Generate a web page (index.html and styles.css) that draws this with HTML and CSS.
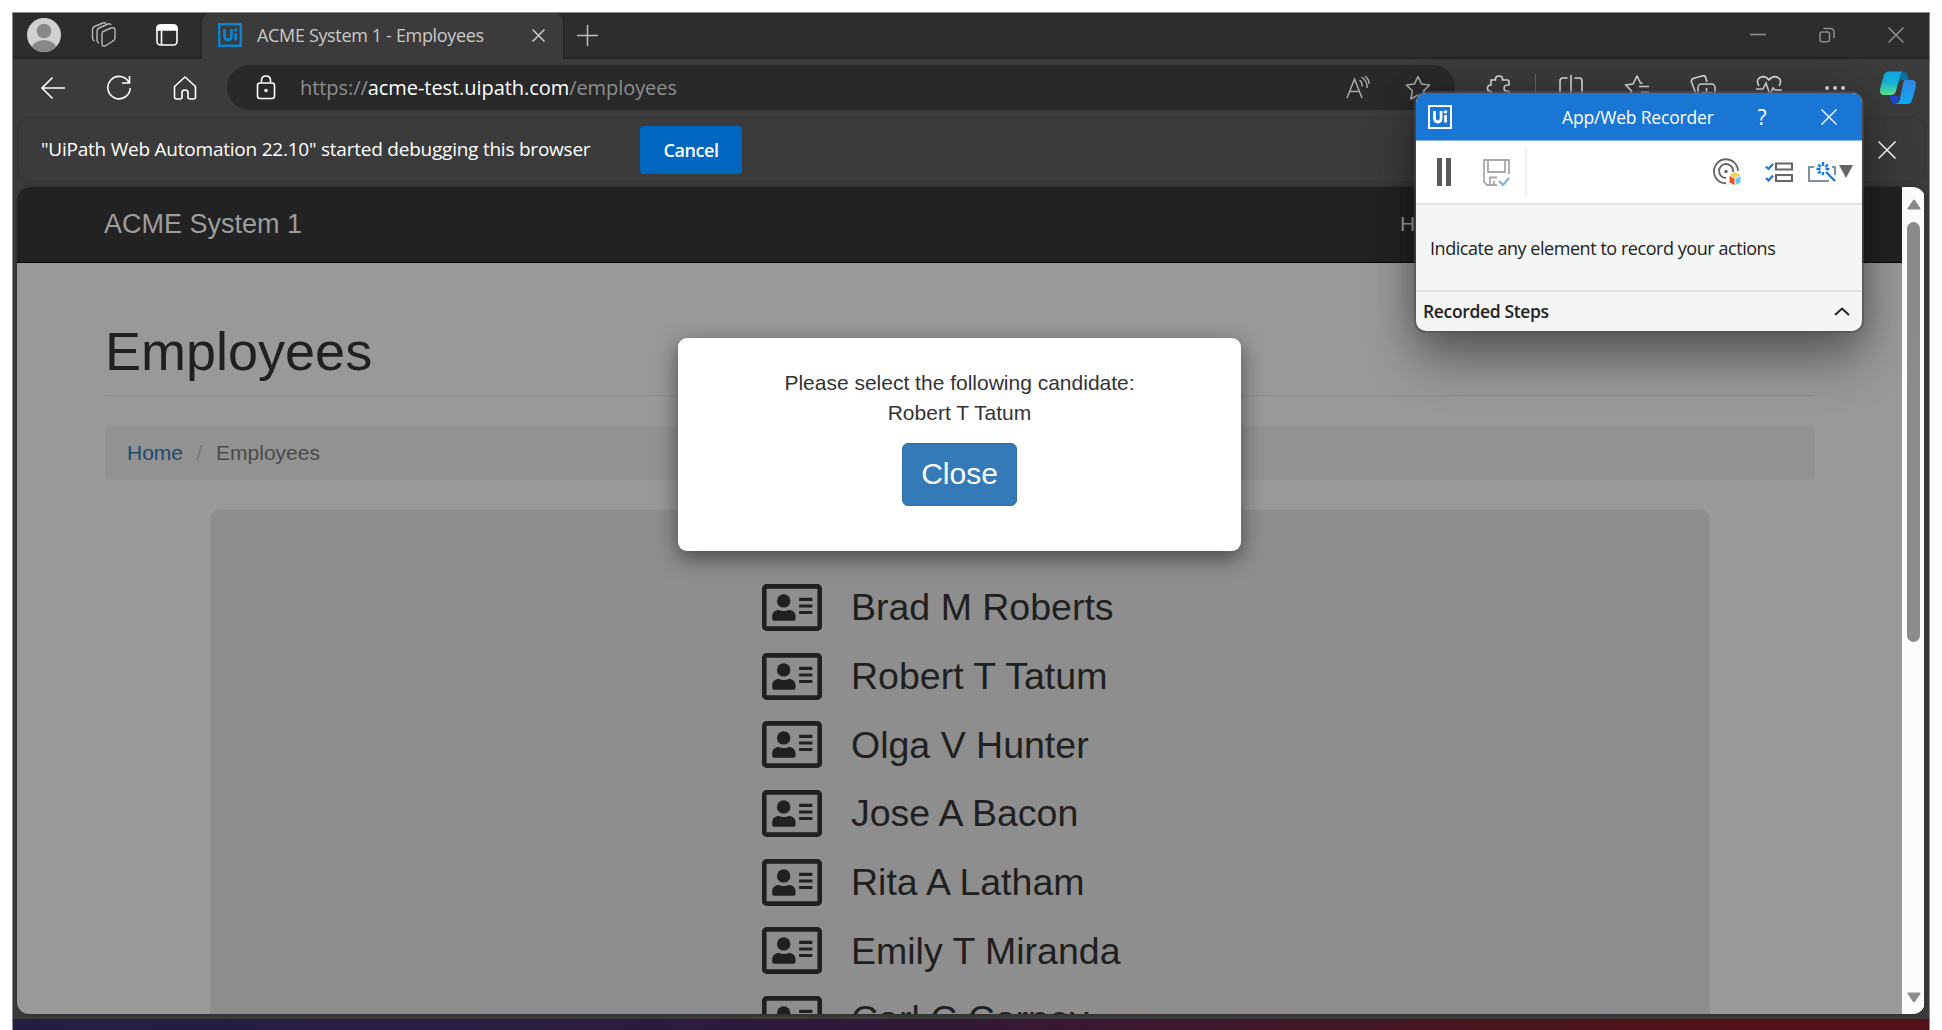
FILE: index.html
```html
<!DOCTYPE html>
<html lang="en">
<head>
<meta charset="utf-8">
<title>ACME System 1 - Employees</title>
<link rel="stylesheet" href="styles.css">
</head>
<body>
<svg width="0" height="0" class="defs">
  <symbol id="card" viewBox="0 0 59 46"><rect x="2.2" y="2.2" width="54.6" height="41.6" rx="2.5" fill="none" stroke="#202020" stroke-width="4.6"/><circle cx="21.3" cy="16.5" r="6.6" fill="#202020"/><path d="M10 34v-2c0-4.5 3-6.6 6.500-6.600 2 .8 3 1.100 5 1.100s3-.3 5-1.100c3.500 0 6.500 2.100 6.500 6.600v2q0 2-2 2H12q-2 0-2-2z" fill="#202020"/><path d="M36.500 15h13M36.500 21.500h13M36.500 28h13" stroke="#202020" stroke-width="3"/></symbol>
</svg>
<div class="window">
  <header class="tabs">
    <svg class="avatar" viewBox="0 0 34 34"><clipPath id="av"><circle cx="17" cy="17" r="17"/></clipPath><g clip-path="url(#av)"><path fill="#d2d0ce" d="M0 0h34v34H0z"/><circle cx="17" cy="13" r="7.300" fill="#8a8886"/><ellipse cx="17" cy="31" rx="12.500" ry="9" fill="#8a8886"/></g></svg>
    <svg class="workspaces" viewBox="0 0 26 26" fill="none" stroke="#b8b8b8" stroke-width="1.400"><path d="M11 10l9-4q4-1 4 2v8q0 2-2 3l-7 4.500q-4 2-4-2v-9.500q0-1.500 1.500-2.500z"/><path d="M8 21q-2-.5-2-3V9q0-2 2-3l9-4q2-.8 3 1"/><path d="M3.500 19Q1.500 18 1.500 16V7.500q0-2 2-3L12 1q2-.8 3 .6"/></svg>
    <svg class="tabpanel" viewBox="0 0 22 22" fill="none" stroke="#fff" stroke-width="1.600"><rect x="1" y="1" width="20" height="20" rx="3.500"/><path d="M1 4.500Q1 1 4.500 1h13Q21 1 21 4.500V6H1z" fill="#fff"/><path d="M5.500 6v15"/></svg>
    <div class="tab">
      <svg class="favicon" viewBox="0 0 24 24"><path fill="none" stroke="#0a85d1" stroke-width="2.400" d="M1.200 1.200h21.600v21.600H1.200z"/><path d="M6.500 6v7q0 4 3.500 4t3.500-4V6M17.800 10v7.500" fill="none" stroke="#0a85d1" stroke-width="2.800"/><circle cx="17.800" cy="7" r="1.700" fill="#0a85d1"/></svg>
      <span class="tab-title">ACME System 1 - Employees</span>
      <svg class="x-tab" viewBox="0 0 13 13" stroke="#cfcfcf" stroke-width="1.500"><path d="M.5.5l12 12M12.500.5l-12 12"/></svg>
    </div>
    <svg class="plus" viewBox="0 0 21 21" stroke="#c0c0c0" stroke-width="1.500"><path d="M10.500 0v21M0 10.500h21"/></svg>
    <div class="winbtns">
      <svg width="16" height="16" viewBox="0 0 16 16" stroke="#8f8f8f" stroke-width="1.600"><path d="M0 7.500h16"/></svg>
      <svg width="16" height="16" viewBox="0 0 16 16" fill="none" stroke="#8f8f8f" stroke-width="1.500"><rect x="1" y="5" width="9.500" height="9.800" rx="2"/><path d="M4.500 1.500H11q4 0 4 4v5.500"/></svg>
      <svg width="16" height="16" viewBox="0 0 16 16" stroke="#8f8f8f" stroke-width="1.500"><path d="M.5.5l15 15M15.500.5l-15 15"/></svg>
    </div>
  </header>
  <nav class="toolbar">
    <span class="cell"><svg width="26" height="24" viewBox="0 0 26 24" fill="none" stroke="#fff" stroke-width="1.600"><path d="M25 12H1.500M12.500 1.500L2 12l10.500 10.500"/></svg></span>
    <span class="cell"><svg width="26" height="26" viewBox="0 0 26 26" fill="none" stroke="#fff" stroke-width="1.600"><path d="M23 7.500A11.200 11.200 0 1 0 24.200 13M23.500 1v7H16"/></svg></span>
    <span class="cell"><svg width="24" height="26" viewBox="0 0 24 26" fill="none" stroke="#fff" stroke-width="1.600" stroke-linejoin="round"><path d="M1.500 11.500L12 2l10.500 9.500V22q0 2-2 2H17q-2 0-2-2v-4.500q0-2.500-3-2.500t-3 2.500V22q0 2-2 2H3.500q-2 0-2-2z"/></svg></span>
    <div class="address">
      <svg class="lock" viewBox="0 0 20 25" fill="none" stroke="#fff" stroke-width="1.600"><rect x="1.500" y="8" width="17" height="15.500" rx="2.500"/><path d="M5.500 8V5.500q0-4.500 4.500-4.500t4.500 4.500V8"/><circle cx="10" cy="15.500" r="1" fill="#fff"/></svg>
      <span class="url">https://<b>acme-test.uipath.com</b>/employees</span>
      <svg class="aloud" viewBox="0 0 25 24" fill="none" stroke="#aaa" stroke-width="1.500"><path d="M1 22L8.500 3 16 22M3.500 15.500h10M13.500 4q3 2 2.500 6.500M15.500 1q6 4 5.500 11M19 0q4 3 4 8"/></svg>
      <svg class="star" viewBox="0 0 26 26" fill="none" stroke="#aaa" stroke-width="1.500" stroke-linejoin="round"><path d="M13 1.500l3.600 7.600 8 1-6 5.700 1.600 8.200L13 20l-7.200 4 1.600-8.200-6-5.700 8-1z"/></svg>
    </div>
    <div class="actions">
      <span class="cell"><svg width="26" height="26" viewBox="0 0 26 26" fill="none" stroke="#ddd" stroke-width="1.600"><path d="M5 5h4.500q-.5-4 3.500-4t3.500 4H21q2 0 2 2v3q-5-.3-5 3.200t5 3.300V25H5v-8.500q-3.500-.3-3.500-3.300T5 10V7z"/></svg></span>
      <i class="sep"></i>
      <span class="cell"><svg width="26" height="26" viewBox="0 0 26 26" fill="none" stroke="#ddd" stroke-width="1.600"><path d="M9 25H2V6q0-3 3-3h4.500M16.500 25H24V6q0-3-3-3h-4.500M13 0v26"/></svg></span>
      <span class="cell"><svg width="26" height="26" viewBox="0 0 26 26" fill="none" stroke="#ddd" stroke-width="1.600" stroke-linejoin="round"><path d="M18.500 8.500l-2-.5L13 1 9 9l-7.500 1 6 5.800L5.500 24M15 11.500h10M17 17h8M17 22h8"/></svg></span>
      <span class="cell"><svg width="26" height="26" viewBox="0 0 26 26" fill="none" stroke="#ddd" stroke-width="1.600"><path d="M6 19L1.500 7Q1 4.500 3 3.500L12 1q3-.8 3.500 1L17 7"/><rect x="8" y="9" width="17" height="17" rx="3.500"/><path d="M16.500 13v10M11.500 18h10"/></svg></span>
      <span class="cell"><svg width="26" height="26" viewBox="0 0 26 26" fill="none" stroke="#ddd" stroke-width="1.600"><path d="M3 11Q-.5 5 4 2.500q5-2.500 9 2.500 4-5 9-2.500Q26.500 5 23 11M0 14h7l3-6 4 12 3-7 2 2h7M6 18l7 7"/><circle cx="20" cy="22" r="4.500" fill="#3f8f45" stroke="none"/></svg></span>
      <span class="cell dots"><svg width="22" height="6" viewBox="0 0 22 6" fill="#e6e6e6"><circle cx="3" cy="3" r="1.900"/><circle cx="11" cy="3" r="1.900"/><circle cx="19" cy="3" r="1.900"/></svg></span>
      <svg class="copilot" viewBox="0 0 36 33"><defs><linearGradient id="cg" x2="0" y2="1"><stop stop-color="#0fa5e8"/><stop offset=".5" stop-color="#18b3cf"/><stop offset="1" stop-color="#5fe38d"/></linearGradient><linearGradient id="cb" x2="0" y2="1"><stop stop-color="#2f86e0"/><stop offset="1" stop-color="#12a8f5"/></linearGradient></defs><path d="M18 1h6q3 0 4 4l1 4h-8l-5 5z" fill="#0b6f9c"/><path d="M10 25h9l-2 8h-1q-4 0-5-4z" fill="#1c47d8"/><path d="M9 .5h15q-3 0-4 4L16 20q-1 4-5 4H4q-4 0-4-4 0-2 1-6L4 4Q5 .5 9 .5z" fill="url(#cg)"/><path d="M25 9h7q4 0 4 4 0 2-1 6l-3 10q-1 4-5 4H16q3-1 4-5l3-15q.500-4 2-4z" fill="url(#cb)"/></svg>
    </div>
  </nav>
  <div class="infobar">
    <span class="info-text">"UiPath Web Automation 22.10" started debugging this browser</span>
    <button class="cancel">Cancel</button>
    <svg class="x-info" viewBox="0 0 18 18" stroke="#fff" stroke-width="1.500"><path d="M.5.5l17 17M17.500.5l-17 17"/></svg>
  </div>
  <div class="viewport">
    <main class="page">
      <div class="navbar"><span class="brand">ACME System 1</span><span class="navlink">Home</span></div>
      <div class="container">
        <h1>Employees</h1>
        <div class="breadcrumb"><a>Home</a><i>/</i><span>Employees</span></div>
        <ul class="people">
          <li><svg><use href="#card"/></svg>Brad M Roberts</li>
          <li><svg><use href="#card"/></svg>Robert T Tatum</li>
          <li><svg><use href="#card"/></svg>Olga V Hunter</li>
          <li><svg><use href="#card"/></svg>Jose A Bacon</li>
          <li><svg><use href="#card"/></svg>Rita A Latham</li>
          <li><svg><use href="#card"/></svg>Emily T Miranda</li>
          <li><svg><use href="#card"/></svg>Carl C Corney</li>
        </ul>
      </div>
      <div class="modal">
        <p>Please select the following candidate:<br>Robert T Tatum</p>
        <button>Close</button>
      </div>
    </main>
    <div class="scrollbar">
      <svg width="14" height="11" viewBox="0 0 14 11"><path d="M7 1.500L12.500 9.500H1.500z" fill="#8b8b8b" stroke="#8b8b8b" stroke-width="2" stroke-linejoin="round"/></svg>
      <div class="thumb"></div>
      <svg width="14" height="11" viewBox="0 0 14 11"><path d="M7 9.500L12.500 1.500H1.500z" fill="#8b8b8b" stroke="#8b8b8b" stroke-width="2" stroke-linejoin="round"/></svg>
    </div>
  </div>
  <div class="desktop"></div>
</div>
<section class="recorder">
  <header>
    <svg class="rlogo" viewBox="0 0 24 24"><path fill="none" stroke="#fff" stroke-width="2" d="M1 1h22v22H1z"/><path d="M6.500 6v7q0 4 3.300 4t3.300-4V6M17.500 10v7.500" fill="none" stroke="#fff" stroke-width="2.800"/><circle cx="17.500" cy="7" r="1.700" fill="#fff"/></svg>
    <span class="rtitle">App/Web Recorder</span>
    <span class="help">?</span>
    <svg class="rx" viewBox="0 0 16 16" stroke="#fff" stroke-width="1.400"><path d="M.5.5l15 15M15.500.5l-15 15"/></svg>
  </header>
  <div class="rtools">
    <svg class="pause" viewBox="0 0 14 28"><path d="M0 0h5v28H0zM9 0h5v28H9z" fill="#5a5a5c"/></svg>
    <svg class="save" viewBox="0 0 27 27" fill="none" stroke="#a9a9a9" stroke-width="1.800"><path d="M26 15V1H1v22l3 3h10M5 1v12h17V1M14 18.500H7V26M11 26v-4"/><path d="M16 22l4 4 6-7" stroke="#7fb0ee" stroke-width="2.200"/></svg>
    <i></i>
    <svg class="target" viewBox="0 0 28 28" fill="none" stroke="#666" stroke-width="1.900"><path d="M13 25.300A12 12 0 1 1 25 13M13 20A7 7 0 1 1 20 14"/><circle cx="13" cy="13.500" r="1.700" fill="#666" stroke="none"/><path d="M22 14l5.500 3-5.500 3-5.500-3z" fill="#f8cf55" stroke="none"/><path d="M16.500 18l5 2.600V27l-5-2.600z" fill="#f04e23" stroke="none"/><path d="M27.500 18l-5 2.600V27l5-2.600z" fill="#64c8f5" stroke="none"/></svg>
    <svg class="checks" viewBox="0 0 28 20" fill="none" stroke="#666" stroke-width="2.200"><path d="M11 1.500h16v6H11zM11 13h16v6H11z"/><path d="M1 4.500l2.500 2.500L8 2M1 16l2.500 2.500L8 13.500" stroke="#1976d2"/></svg>
    <svg class="magic" viewBox="0 0 28 20" fill="none" stroke="#84909a" stroke-width="2.200"><path d="M6 5H1v14h20M24 5h3v8"/><g stroke="#1478e6" stroke-width="2.400"><path d="M15 0v4M15 10v3M8.500 7h4M17.500 7h4M10.300 2.500l2.300 2.300M19.700 2.500l-2.300 2.300M10.300 11.500l2.300-2.300M18 10l9 9"/></g></svg>
    <svg class="caret" viewBox="0 0 14 14"><path d="M0 0h14L7 13z" fill="#666"/></svg>
  </div>
  <div class="rmsg"><span>Indicate any element to record your actions</span></div>
  <footer><span>Recorded Steps</span><svg width="16" height="9" viewBox="0 0 16 9" fill="none" stroke="#222" stroke-width="2"><path d="M1 8l7-6.500L15 8"/></svg></footer>
</section>
</body>
</html>
```

FILE: styles.css
```css
* { box-sizing: border-box; }
body { margin: 0; height: 1030px; overflow: hidden; background: #fff; font-family: "Open Sans", "Noto Sans", sans-serif; }
.defs { position: absolute; }
svg { flex: none; display: block; }
button { border: 0; padding: 0; font: inherit; }

.window { margin: 12px 12px 0; width: 1918px; height: 1018px; border: solid #8c8c8c; border-width: 1px 1px 0; background: #3b3b3b; display: flex; flex-direction: column; }
.tabs { height: 46px; padding-bottom: 2px; background: #2d2d2d; box-shadow: inset 0 -2px 2px -1px #1d1d1d; display: flex; align-items: center; flex: none; }
.avatar { width: 34px; height: 34px; margin-left: 14px; }
.workspaces { width: 26px; height: 26px; margin-left: 30px; }
.tabpanel { width: 22px; height: 22px; margin-left: 39px; }
.tab { width: 361px; height: 46px; margin: 2px 0 0 24px; padding: 0 0 2px 16px; background: #3b3b3b; border-radius: 8px 8px 0 0; box-shadow: 0 0 3px #1a1a1a; clip-path: inset(0 -4px 0 -4px); display: flex; align-items: center; }
.favicon { width: 24px; height: 24px; }
.tab-title { width: 228px; margin-left: 15px; font-size: 18px; letter-spacing: -.34px; color: #c9c9c9; white-space: nowrap; }
.x-tab { width: 13px; height: 13px; margin-left: 47px; }
.plus { width: 21px; height: 21px; margin-left: 14px; }
.winbtns { margin-left: auto; padding-right: 25px; display: flex; gap: 53px; }

.toolbar { height: 57px; display: flex; align-items: center; padding: 0 0 0 7px; flex: none; }
.cell { width: 66px; display: flex; justify-content: center; flex: none; }
.address { width: 1228px; height: 45px; margin-left: 9px; border-radius: 23px; background: #292929; display: flex; align-items: center; padding: 0 24px 0 29px; }
.lock { width: 20px; height: 25px; }
.url { margin-left: 24px; font-size: 20px; letter-spacing: -.06px; color: #8f8f8f; flex: 1; white-space: nowrap; }
.url b { font-weight: 400; color: #fff; }
.aloud { width: 25px; height: 24px; margin-right: -1px; }
.star { width: 26px; height: 26px; margin-left: 35px; }
.actions { display: flex; align-items: center; padding-left: 11px; }
.sep { width: 1px; height: 28px; background: #666; margin: 0 2px 0 3px; }
.copilot { width: 36px; height: 33px; margin-left: 12px; }

.infobar { height: 65px; margin: 1px 4px 0; padding-left: 23px; border: 1px solid #353535; border-radius: 12px; display: flex; align-items: center; flex: none; }
.info-text { width: 552px; padding-bottom: 2px; font-size: 19px; letter-spacing: -.23px; color: #fff; white-space: nowrap; }
.cancel { width: 102px; height: 48px; margin-left: 47px; border-radius: 4px; background: #0067c0; color: #fff; font-size: 18px; font-weight: 600; letter-spacing: -.4px; }
.x-info { width: 18px; height: 18px; margin-left: auto; margin-right: 28px; }

.viewport { height: 827px; margin: 5px 4px 0; border-radius: 12px; overflow: hidden; display: flex; flex: none; box-shadow: 0 0 3px #222; }
.page { width: 1885px; background: #999; font-family: "Liberation Sans", Arial, sans-serif; font-size: 21px; line-height: 30px; position: relative; }
.navbar { height: 76px; background: #222; border-bottom: 1px solid #080808; padding: 0 87px 1px; display: flex; align-items: center; color: #9d9d9d; }
.brand { font-size: 27px; }
.navlink { margin-left: 1098px; }
.container { width: 1710px; margin-left: 88px; color: #202020; }
h1 { margin: 0 0 30px; padding-top: 58px; height: 133px; border-bottom: 1px solid #8d8d8d; font-size: 54px; font-weight: 400; line-height: 60px; }
.breadcrumb { height: 54px; padding: 0 22px 1px; border-radius: 6px; background: #929292; display: flex; align-items: center; color: #4a4a4a; }
.breadcrumb a { color: #1f4a70; }
.breadcrumb i { width: 33px; text-align: center; font-style: normal; color: #7a7a7a; }
.people { width: 1500px; height: 600px; margin: 30px 0 0 105px; padding: 63px 0 0 552px; border-radius: 9px; background: #8e8e8e; list-style: none; font-size: 37.5px; }
.people li { height: 68.7px; display: flex; align-items: center; gap: 29px; white-space: nowrap; }
.people svg { width: 60px; height: 47px; }
.modal { position: absolute; left: 661px; top: 151px; width: 563px; height: 213px; padding-top: 30px; border-radius: 9px; background: #fff; box-shadow: 0 7px 22px rgba(0,0,0,.5); text-align: center; color: #333; }
.modal p { margin: 0 0 15px; }
.modal button { width: 115px; height: 63px; padding-bottom: 2px; border: 1px solid #2e6da4; border-radius: 6px; background: #337ab7; color: #fff; font-size: 30px; }
.scrollbar { width: 22px; background: #fcfcfc; display: flex; flex-direction: column; align-items: center; padding: 12px 0 11px 1px; }
.thumb { width: 13px; height: 420px; margin: 12px 0 auto; border-radius: 7px; background: #8b8b8b; }
.desktop { height: 11px; margin-top: auto; background: linear-gradient(90deg, #241f42 0, #2a1d40 30%, #2e1a3a 42%, #3a1830 58%, #471620 75%, #501217 90%); }

.recorder { position: absolute; left: 1416px; top: 93px; width: 446px; height: 238px; border-radius: 10px; overflow: hidden; background: #f4f6f6; color: #222; box-shadow: 0 0 0 2px rgba(80,80,80,.6), 0 28px 50px rgba(0,0,0,.38), 0 0 36px rgba(0,0,0,.22); }
.recorder header { height: 48px; background: #1976d5; border-bottom: 1px solid #8ab9ea; color: #fff; display: flex; align-items: center; padding-left: 12px; }
.rlogo { width: 24px; height: 24px; }
.rtitle { width: 153px; margin-left: 110px; font-size: 17.500px; letter-spacing: -.18px; white-space: nowrap; }
.help { width: 12px; margin-left: 41px; font-size: 21px; text-align: center; }
.rx { width: 16px; height: 16px; margin-left: 53px; }
.rtools { height: 64px; background: #fff; border-bottom: 2px solid #e0e3e3; display: flex; align-items: center; padding-left: 21px; }
.pause { width: 14px; height: 28px; }
.save { width: 27px; height: 27px; margin-left: 32px; }
.rtools i { width: 2px; height: 48px; margin-left: 15px; background: #f0f0f0; }
.target { width: 28px; height: 28px; margin-left: 186px; }
.checks { width: 28px; height: 20px; margin-left: 24px; }
.magic { width: 28px; height: 20px; margin-left: 15px; }
.caret { width: 14px; height: 14px; margin-left: 3px; }
.rmsg { height: 87px; border-bottom: 2px solid #e0e3e3; padding-left: 14px; display: flex; align-items: center; font-size: 18px; letter-spacing: -.45px; }
.recorder footer { height: 39px; padding: 0 12px 1px 7px; display: flex; align-items: center; justify-content: space-between; font-size: 17.500px; font-weight: 600; letter-spacing: -.35px; }
```
